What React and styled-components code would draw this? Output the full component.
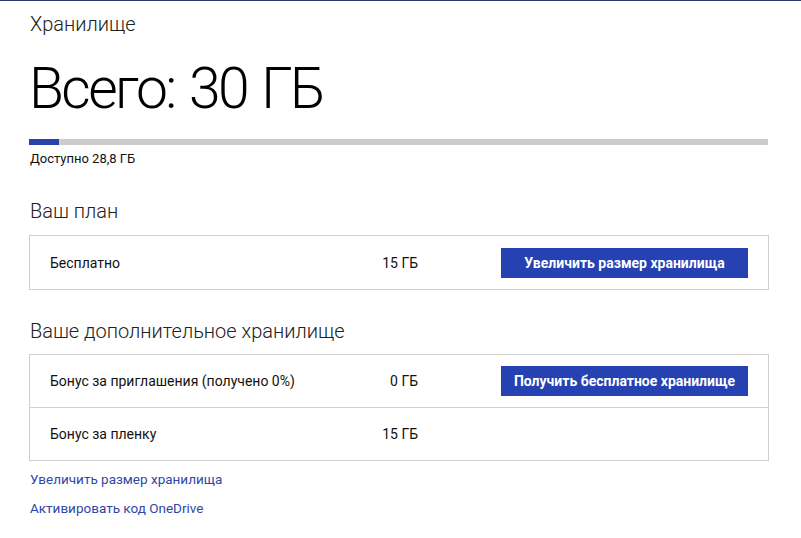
import React from "react";
import styled, { createGlobalStyle } from "styled-components";

const FONT = `Roboto, "Noto Sans", sans-serif`;

const Global = createGlobalStyle`
  html, body { margin: 0; padding: 0; background: #ffffff; }
  body { font-family: ${FONT}; color: #111; }
`;

const Page = styled.div`
  border-top: 1px solid #2e3a6b;
  padding: 0 32px 20px 29px;
  width: 740px;
  box-sizing: content-box;
`;

const PageTitle = styled.h1`
  margin: 8px 0 0 1px;
  font-size: 20px;
  font-weight: 300;
  line-height: 30px;
  color: #222;
`;

const Total = styled.div`
  margin: 15px 0 0 0;
  font-size: 57px;
  font-weight: 300;
  line-height: 70px;
  letter-spacing: -2.6px;
  word-spacing: 3px;
  color: #000;
`;

const Bar = styled.div`
  margin-top: 15px;
  height: 6px;
  background: #cccccc;
  width: 739px;
`;

const BarFill = styled.div`
  height: 100%;
  background: #2a43a8;
`;

const Caption = styled.div`
  margin: 6px 0 0 1px;
  font-size: 13px;
  line-height: 16px;
  color: #111;
`;

const SectionTitle = styled.h2`
  margin: ${(p) => p.$top}px 0 0 1px;
  font-size: 20px;
  font-weight: 300;
  line-height: 26px;
  color: #222;
`;

const Box = styled.div`
  margin-top: ${(p) => p.$top}px;
  border: 1px solid #cfcfcf;
  width: 738px;
`;

const Row = styled.div`
  display: grid;
  grid-template-columns: 368px 247px;
  column-gap: 83px;
  align-items: center;
  height: ${(p) => p.$h}px;
  padding: 0 20px;
  font-size: 14px;
  color: #111;
  & + & {
    border-top: 1px solid #cfcfcf;
  }
`;

const Info = styled.div`
  display: flex;
  justify-content: space-between;
`;

const Action = styled.button`
  height: 30px;
  border: none;
  background: #2541b2;
  color: #fff;
  font-family: ${FONT};
  font-size: 14px;
  font-weight: 700;
  padding: 0;
  cursor: pointer;
`;

const Links = styled.div`
  display: flex;
  flex-direction: column;
  gap: 11px;
  margin-top: 9px;
`;

const Link = styled.a`
  font-size: 13.5px;
  line-height: 18px;
  color: #2f47a6;
  text-decoration: none;
  margin-left: 1px;
`;

const used = 1.2 / 30;

export default function App() {
  return (
    <>
      <Global />
      <Page>
        <PageTitle>Хранилище</PageTitle>
        <Total>Всего: 30 ГБ</Total>
        <Bar>
          <BarFill style={{ width: `${Math.max(used * 100, 3.8)}%` }} />
        </Bar>
        <Caption>Доступно 28,8 ГБ</Caption>

        <SectionTitle $top={31}>Ваш план</SectionTitle>
        <Box $top={11}>
          <Row $h={53}>
            <Info>
              <span>Бесплатно</span>
              <span>15 ГБ</span>
            </Info>
            <Action>Увеличить размер хранилища</Action>
          </Row>
        </Box>

        <SectionTitle $top={28}>Ваше дополнительное хранилище</SectionTitle>
        <Box $top={10}>
          <Row $h={52}>
            <Info>
              <span>Бонус за приглашения (получено 0%)</span>
              <span>0 ГБ</span>
            </Info>
            <Action>Получить бесплатное хранилище</Action>
          </Row>
          <Row $h={52}>
            <Info>
              <span>Бонус за пленку</span>
              <span>15 ГБ</span>
            </Info>
          </Row>
        </Box>

        <Links>
          <Link href="#">Увеличить размер хранилища</Link>
          <Link href="#">Активировать код OneDrive</Link>
        </Links>
      </Page>
    </>
  );
}
